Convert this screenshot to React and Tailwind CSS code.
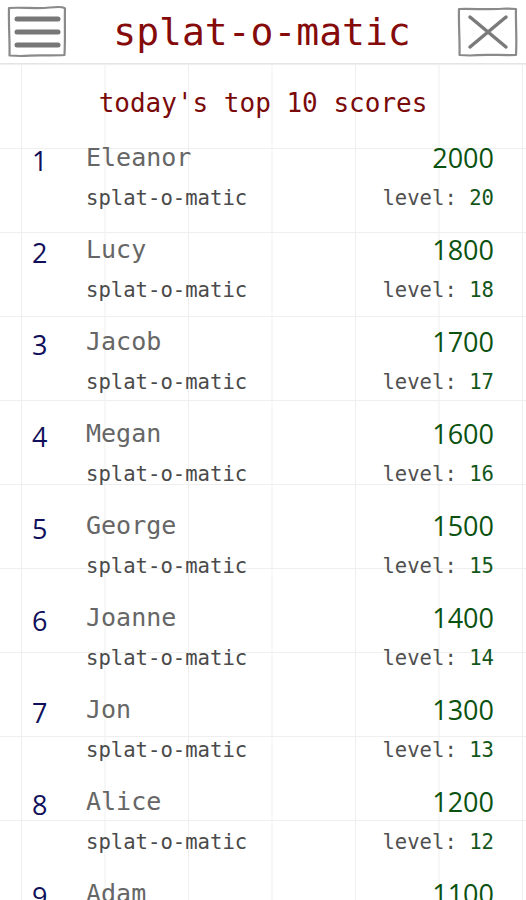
import React from "react";

const rows = [
  ["Eleanor", 2000, 20],
  ["Lucy", 1800, 18],
  ["Jacob", 1700, 17],
  ["Megan", 1600, 16],
  ["George", 1500, 15],
  ["Joanne", 1400, 14],
  ["Jon", 1300, 13],
  ["Alice", 1200, 12],
  ["Adam", 1100, 11],
  ["Ruth", 1000, 10],
];

const mono = "font-['DejaVu_Sans_Mono','Liberation_Mono',monospace]";
const sans = "font-['Open_Sans','Noto_Sans',sans-serif]";

function MenuIcon() {
  return (
    <svg width="62" height="54" viewBox="0 0 62 54" fill="none">
      <path
        d="M3 3 C15 2, 30 4, 44 2.5 S58 3, 59 3.5 C58.5 15, 59.5 30, 58.5 50 C45 51, 30 49.5, 15 51 L3.5 50.5 C4 38, 2.5 20, 3 3 Z"
        stroke="#8a8a8a"
        strokeWidth="2.2"
        strokeLinejoin="round"
      />
      <line x1="11" y1="14" x2="52" y2="14" stroke="#777" strokeWidth="5" strokeLinecap="round" />
      <line x1="11" y1="27" x2="52" y2="27" stroke="#777" strokeWidth="5" strokeLinecap="round" />
      <line x1="11" y1="40" x2="52" y2="40" stroke="#777" strokeWidth="5" strokeLinecap="round" />
    </svg>
  );
}

function CloseIcon() {
  return (
    <svg width="64" height="52" viewBox="0 0 64 52" fill="none">
      <path
        d="M3 3 C18 2.5, 35 4, 50 2.5 L60 3 C59.5 15, 61 32, 60 49 C45 49.5, 28 48, 14 49.5 L3.5 49 C4 36, 2.5 18, 3 3 Z"
        stroke="#8a8a8a"
        strokeWidth="2.2"
        strokeLinejoin="round"
      />
      <line x1="14" y1="11" x2="50" y2="41" stroke="#7a7a7a" strokeWidth="3.5" strokeLinecap="round" />
      <line x1="50" y1="11" x2="14" y2="41" stroke="#7a7a7a" strokeWidth="3.5" strokeLinecap="round" />
    </svg>
  );
}

export default function App() {
  return (
    <div className="w-[526px] h-[900px] overflow-hidden bg-white">
      <header className="h-[64px] flex items-center justify-between border-b border-[#e4e4e4] pl-[6px] pr-[6px]">
        <MenuIcon />
        <h1 className={`${mono} text-[38px] leading-none text-[#850b0b]`}>splat-o-matic</h1>
        <CloseIcon />
      </header>
      <main className="bg-[linear-gradient(to_right,#efefef_1px,transparent_1px),linear-gradient(to_bottom,#efefef_1px,transparent_1px)] bg-[size:83.5px_84px] bg-[position:21px_0px] h-[836px]">
        <h2 className={`${mono} pt-[19px] h-[59px] leading-[40px] text-center text-[26px] text-[#7a0a0a]`}>
          today's top 10 scores
        </h2>
        <ul className="mt-[15px]">
          {rows.map(([name, score, level], i) => (
            <li key={name} className="h-[92px] flex pl-[32px] pr-[32px]">
              <div className={`${sans} w-[54px] leading-[46px] text-[27px] font-medium text-[#10105a]`}>{i + 1}</div>
              <div className="flex-1">
                <div className="flex justify-between h-[40px] items-center">
                  <span className={`${mono} text-[25px] text-[#666]`}>{name}</span>
                  <span className={`${sans} text-[27px] text-[#0b5210]`}>{score}</span>
                </div>
                <div className="flex justify-between h-[40px] items-center">
                  <span className={`${mono} text-[20.6px] text-[#4a4a4a]`}>splat-o-matic</span>
                  <span className={`${mono} text-[20.6px] text-[#505050]`}>
                    level: <span className="text-[#13561a]">{level}</span>
                  </span>
                </div>
              </div>
            </li>
          ))}
        </ul>
      </main>
    </div>
  );
}
